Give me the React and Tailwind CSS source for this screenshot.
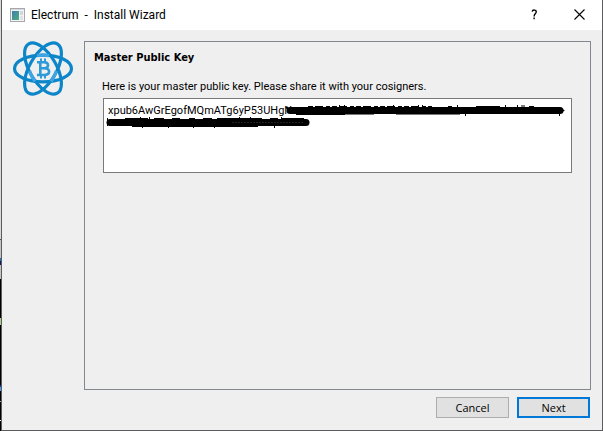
import { useState } from 'react';

const PUBLIC_KEY = 'xpub6AwGrEgofMQmATg6yP53UHgN';

// what shows of the desktop left of the window
const DESKTOP_STRIP = [
  'h-[239px] bg-[#d9d9d9]',
  'h-px bg-[#555555]',
  'h-[18px] bg-[#c4c4c4]',
  'h-[3px] bg-[#1f6fb5]',
  'h-[4px] bg-[#1b1464]',
  'h-[14px] bg-[#c4c4c4]',
  'h-[39px] bg-black',
  'h-[7px] bg-[#a9cf8c]',
  'h-[60px] bg-black',
  'h-[2px] bg-[#1030a0]',
  'h-[4px] bg-[#4a9fe0]',
  'h-[10px] bg-black',
  'h-px bg-[#8aa8c8]',
  'h-[18px] bg-black',
  'h-px bg-white',
  'grow bg-black',
];

function AppIcon() {
  return (
    <svg className="w-[15px] h-[14px]" viewBox="0 0 15 14" aria-hidden="true">
      <defs>
        <linearGradient id="pane" x1="0" y1="0" x2="1" y2="1">
          <stop offset="0" stopColor="#3f7fb0" />
          <stop offset="1" stopColor="#4fae7c" />
        </linearGradient>
      </defs>
      <rect x="0.5" y="0.5" width="14" height="13" fill="#f4f4f4" stroke="#a5a9ad" />
      <rect x="1" y="1" width="13" height="1" fill="#d5dade" />
      <rect x="2" y="3" width="7" height="9" fill="url(#pane)" />
      <rect x="10" y="3" width="3" height="4" fill="#d2d6da" />
      <rect x="10" y="8" width="3" height="4" fill="#dfe3e6" />
    </svg>
  );
}

function Logo() {
  return (
    <svg className="w-[62px] h-[56px]" viewBox="0 0 62 56" role="img" aria-label="Electrum">
      <g fill="none" stroke="#0c86c8" strokeWidth="3.2">
        <ellipse cx="31" cy="27.5" rx="28.5" ry="13.4" />
        <ellipse cx="31" cy="27.5" rx="28.5" ry="13.4" transform="rotate(60 31 27.5)" />
        <ellipse cx="31" cy="27.5" rx="28.5" ry="13.4" transform="rotate(-60 31 27.5)" />
      </g>
      <g fill="none" stroke="#3ea4e4" strokeWidth="3.2">
        <path d="M17.6 30 C19 34.5 20.8 37.5 23 40.5" />
        <path d="M44.4 30 C43 34.5 41.2 37.5 39 40.5" />
        <path d="M25 14.6 C29 14 33 14 37 14.6" />
      </g>
      <g fill="none" stroke="#2f9ad8" strokeWidth="2.6">
        <path d="M25 21.3 H32 C37.4 21.3 37.4 27.2 32 27.2 H29 M32 27.2 C38.8 27.2 38.8 34 32 34 H25 M28.3 21 V34" />
        <path strokeWidth="2" d="M29 17.5 V21 M33 17.5 V21 M29 34 V37.5 M33 34 V37.5" />
      </g>
    </svg>
  );
}

function Redaction() {
  return (
    <svg
      className="absolute left-0 top-0 w-[468px] h-[36px] pointer-events-none"
      viewBox="0 0 468 36"
      fill="none"
      stroke="#000"
      aria-hidden="true"
    >
      <path strokeWidth="7" strokeLinecap="round" d="M188 12.5 H458" />
      <path strokeWidth="2" strokeLinecap="round" d="M185 9.5 L189 14 M457 10 L461 12.5 L457 15" />
      <path d="M194 16.5 H243" />
      <path stroke="#777" d="M243 16.5 H272 M294 16.5 H358" />
      <path strokeDasharray="5 2 8 3 4 2" d="M206 8.5 H330" />
      <path d="M237.5 7 V9 M242.5 7 V9 M291.5 7 V9 M316.5 7 V9 M320.5 7 V9 M346 8.5 H350 M355.5 7 V9 M374 8.5 H398 M403.5 7 V9 M415.5 7 V9 M419 8 H423 M427 8.5 H432 M363.5 16 V18 M457.5 16 V18" />

      <path strokeWidth="7" strokeLinecap="round" d="M8 24.5 H204" />
      <path d="M30 28.5 H156" />
      <path d="M5.5 20 V28 M23 20.5 H46 M52 20.5 H62 M70 20.5 H78 M87 20.5 H93 M101 20.5 H110 M115 20.5 H160 M168 20.5 H176 M180 20.5 H202" />
      <path d="M38.5 19 V21 M47.5 19 V21 M137.5 19 V21 M148.5 19 V21 M179.5 19 V21 M40.5 28 V30 M66.5 28 V30 M91.5 28 V30 M112.5 28 V30 M172.5 28 V30" />
      <path stroke="#222" strokeDasharray="2 1" d="M130 24.5 H202" />
    </svg>
  );
}

export default function App() {
  const [key, setKey] = useState(PUBLIC_KEY);

  return (
    <div className="flex min-h-screen bg-white font-['Roboto',sans-serif] text-black">
      <div className="flex w-px shrink-0 flex-col" aria-hidden="true">
        {DESKTOP_STRIP.map((cls, i) => (
          <div key={i} className={cls} />
        ))}
      </div>

      <div className="flex grow flex-col border-x border-b border-[#5c5c5f] bg-[#efefef]">
        <header className="flex h-[30px] items-center bg-white pl-2">
          <AppIcon />
          <h1 className="ml-[6px] grow whitespace-pre text-[12px] leading-4">
            Electrum  -  Install Wizard
          </h1>
          <button type="button" aria-label="Help" className="flex h-full w-[45px] items-center justify-center pb-px">
            <svg className="w-2 h-3" viewBox="0 0 8 12" fill="none" stroke="#000" strokeWidth="1.4">
              <path d="M1.2 2.6 C1.6 0.4 5.4 0.6 5.2 3 C5.1 4.8 3.1 5 3.1 7.4" />
              <path d="M3.1 8.6 V10.2" />
            </svg>
          </button>
          <button type="button" aria-label="Close" className="flex h-full w-[45px] items-center justify-center pb-px">
            <svg className="w-[11px] h-[11px]" viewBox="0 0 11 11" stroke="#000" strokeWidth="1.1">
              <path d="M0.5 0.5 L10.5 10.5 M10.5 0.5 L0.5 10.5" />
            </svg>
          </button>
        </header>

        <main className="flex grow flex-col pt-[11px] pr-[11px] pb-3 pl-[10px]">
          <div className="flex grow">
            <div className="w-[72px] shrink-0">
              <Logo />
            </div>
            <section className="grow border border-[#828790] pt-2 pr-[18px] pl-[9px]">
              <h2 className="text-[11px] leading-4 font-bold font-['DejaVu_Sans_Condensed','DejaVu_Sans',sans-serif]">
                Master Public Key
              </h2>
              <div className="mt-[13px] pl-2">
                <label htmlFor="mpk" className="block text-[11px] leading-4">
                  Here is your master public key. Please share it with your cosigners.
                </label>
                <div className="relative mt-[3px] pl-px">
                  <textarea
                    id="mpk"
                    className="block h-[75px] w-full resize-none border border-[#7a7a7a] bg-white px-1 py-[5px] text-[11px] leading-[13px] outline-none"
                    spellCheck={false}
                    value={key}
                    onChange={e => setKey(e.target.value)}
                  />
                  <Redaction />
                </div>
              </div>
            </section>
          </div>

          <div className="mt-[7px] flex justify-end gap-2 pr-px text-[11px] leading-4 font-['Open_Sans',sans-serif]">
            <button type="button" className="h-[21px] w-[73px] border border-[#adadad] bg-[#e1e1e1]">
              Cancel
            </button>
            <button type="button" className="h-[21px] w-[73px] border-2 border-[#0078d7] bg-[#e1e1e1]">
              Next
            </button>
          </div>
        </main>
      </div>
    </div>
  );
}
